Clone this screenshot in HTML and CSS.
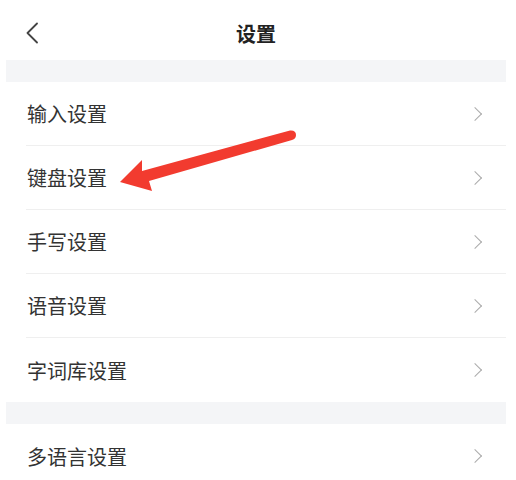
FILE: index.html
```html
<!DOCTYPE html>
<html lang="zh-CN">

<head>
    <meta charset="UTF-8">
    <meta name="viewport" content="width=device-width, initial-scale=1.0">
    <title>设置</title>
    <link rel="stylesheet" href="styles.css">
</head>

<body>

    <div class="page">
        <div class="top-bar">
            <svg class="back-icon" width="12" height="22" viewBox="0 0 12 22">
                <path d="M11 1.5 L1.5 11 L11 20.5" fill="none" stroke="#444" stroke-width="1.8" stroke-linecap="round" stroke-linejoin="round"/>
            </svg>
            <h1>设置</h1>
        </div>

        <div class="gap-band"></div>

        <ul class="setting-list">
            <li class="setting-item"><span>输入设置</span><i class="chevron"></i></li>
            <li class="setting-item"><span>键盘设置</span><i class="chevron"></i></li>
            <li class="setting-item"><span>手写设置</span><i class="chevron"></i></li>
            <li class="setting-item"><span>语音设置</span><i class="chevron"></i></li>
            <li class="setting-item"><span>字词库设置</span><i class="chevron"></i></li>
        </ul>

        <div class="gap-band"></div>

        <ul class="setting-list">
            <li class="setting-item"><span>多语言设置</span><i class="chevron"></i></li>
        </ul>

        <!-- red annotation arrow pointing at 键盘设置 -->
        <svg class="note-arrow" width="516" height="480" viewBox="0 0 516 480">
            <path d="M120 182 L142 160 L142 171 L290 130.5 Q296 130 296 135 Q296 139 292 140 L149 181 L152 191 Z" fill="#f23b2f"/>
        </svg>
    </div>

</body>

</html>
```

FILE: styles.css
```css
* {
    margin: 0;
    padding: 0;
    box-sizing: border-box;
}

body {
    font-family: "Noto Sans CJK SC", "Noto Sans", sans-serif;
    background-color: #fff;
    color: #333;
}

.page {
    position: relative;
    width: 500px;
    margin-left: 6px;
}

.top-bar {
    height: 60px;
    display: flex;
    align-items: center;
    justify-content: center;
    position: relative;
}

.top-bar h1 {
    font-size: 20px;
    font-weight: bold;
    color: #222;
    margin-top: 6px;
}

.back-icon {
    position: absolute;
    left: 20px;
    top: 22px;
}

.gap-band {
    height: 22px;
    background-color: #f4f5f7;
}

.setting-list {
    list-style: none;
    padding-left: 20px;
}

.setting-item {
    height: 64px;
    display: flex;
    align-items: center;
    justify-content: space-between;
    border-bottom: 1px solid #efefef;
    font-size: 20px;
    color: #333;
}

.setting-item:last-child {
    border-bottom: none;
}

.setting-item span {
    padding-left: 1px;
}

.chevron {
    width: 10px;
    height: 10px;
    border-top: 1.5px solid #aaa;
    border-right: 1.5px solid #aaa;
    transform: rotate(45deg);
    margin-right: 26px;
}

.note-arrow {
    position: absolute;
    left: -6px;
    top: 0;
    pointer-events: none;
}
```
